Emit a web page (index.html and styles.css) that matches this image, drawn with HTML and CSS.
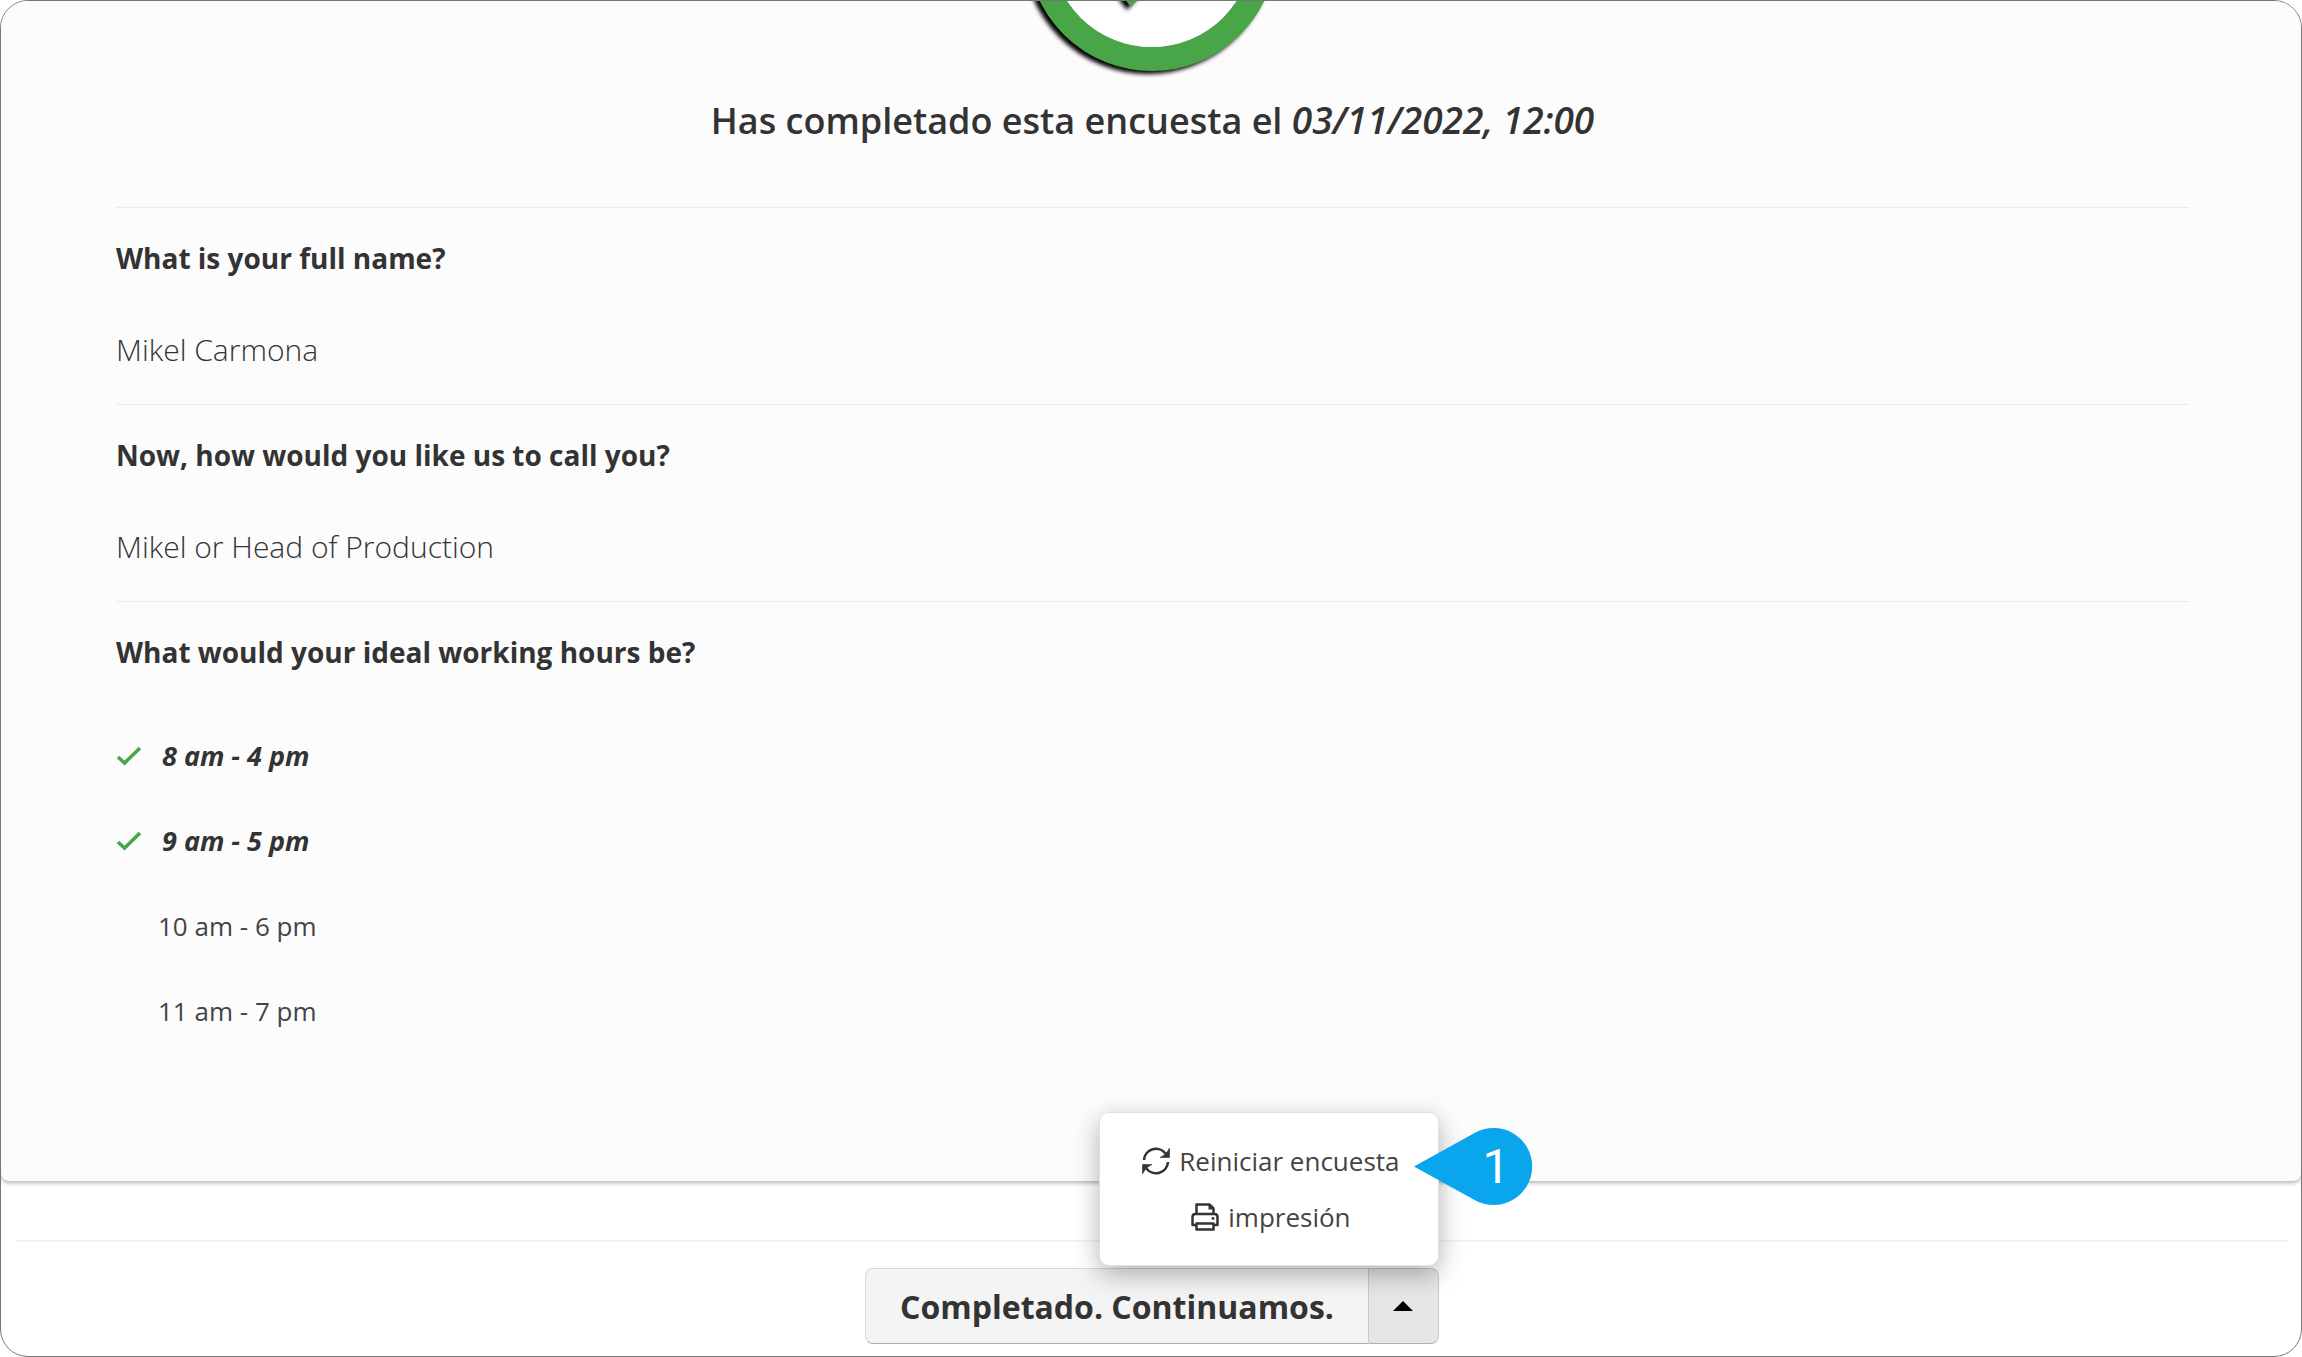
FILE: index.html
```
<!DOCTYPE html>
<html lang="es">
<head>
<meta charset="utf-8">
<title>Encuesta completada</title>
<meta name="viewport" content="width=device-width, initial-scale=1">
<link rel="stylesheet" href="styles.css">
</head>
<body>
<div class="window">
  <main class="card">
    <header class="hero">
      <svg class="hero-badge" viewBox="0 0 280 80" aria-hidden="true">
        <circle class="badge-shape" cx="139" cy="-55" r="113" fill="none" stroke="#48a648" stroke-width="24"/>
        <circle cx="139" cy="-55" r="101" fill="#fff"/>
        <path class="badge-tick" d="M70 -54 L86 -70 L118 -36 L190 -108 L206 -92 L118 6 Z" fill="#48a648"/>
      </svg>
      <h1 class="hero-title">Has completado esta encuesta el <em class="hero-date">03/11/2022, 12:00</em></h1>
    </header>
    <section class="question">
      <h2 class="question-title">What is your full name?</h2>
      <p class="answer">Mikel Carmona</p>
    </section>
    <section class="question">
      <h2 class="question-title">Now, how would you like us to call you?</h2>
      <p class="answer">Mikel or Head of Production</p>
    </section>
    <section class="question">
      <h2 class="question-title">What would your ideal working hours be?</h2>
      <ul class="options">
        <li class="option option-chosen"><svg class="tick" viewBox="0 0 26 20" aria-hidden="true"><path d="M2 11 8.500 17 24 2"/></svg><span>8 am - 4 pm</span></li>
        <li class="option option-chosen"><svg class="tick" viewBox="0 0 26 20" aria-hidden="true"><path d="M2 11 8.500 17 24 2"/></svg><span>9 am - 5 pm</span></li>
        <li class="option">10 am - 6 pm</li>
        <li class="option">11 am - 7 pm</li>
      </ul>
    </section>
  </main>
  <footer class="footer">
    <div class="split">
      <button class="split-main" type="button">Completado. Continuamos.</button>
      <button class="split-toggle" type="button" aria-label="Más opciones" aria-expanded="true">
        <svg class="caret" viewBox="0 0 20 10" aria-hidden="true"><path d="M0 10 10 0 20 10Z"/></svg>
      </button>
      <div class="menu">
        <button class="menu-item" type="button">
          <svg class="menu-icon" viewBox="0 0 28 28" aria-hidden="true">
            <path d="M2 13A12 12 0 0 1 23.500 6.500M26 15A12 12 0 0 1 4.500 21.500" fill="none" stroke="#333" stroke-width="2.600"/>
            <path d="M27.500 1V10.500H18Q24 8 27.500 1ZM0.500 27V17.500H10Q4 20 0.500 27Z" fill="#333" stroke="#333" stroke-width="0.600"/>
          </svg>
          Reiniciar encuesta
        </button>
        <button class="menu-item" type="button">
          <svg class="menu-icon" viewBox="0 0 28 28" aria-hidden="true">
            <g fill="none" stroke="#333" stroke-width="2.500" stroke-linejoin="round">
              <path d="M5.500 11V1.500H18.500L22.500 5.500V11"/>
              <path d="M5.500 22H1.500V14Q1.500 11 4.500 11H23.500Q26.500 11 26.500 14V22H22.500"/>
              <path d="M5.500 20.500H22.500V26.500H5.500Z"/>
            </g>
            <path d="M17.500 1.500V6.500H22.500Z" fill="#333"/>
            <circle cx="22" cy="15.500" r="1.400" fill="#333"/>
          </svg>
          impresión
        </button>
        <div class="callout">
          <svg class="callout-shape" viewBox="0 0 118 78" aria-hidden="true"><path d="M0 38.500 60.500 5.100A38.500 38.500 0 1 1 60.500 71.900Z" fill="#09a6ee"/></svg>
          <span class="callout-number">1</span>
        </div>
      </div>
    </div>
  </footer>
</div>
</body>
</html>
```
FILE: styles.css
```
* {
  box-sizing: border-box;
}

body {
  margin: 0;
  background: #fff;
  color: #333;
  font-family: "Open Sans", "Noto Sans", sans-serif;
}

h1, h2, p, ul {
  margin: 0;
  padding: 0;
}

button {
  font-family: inherit;
  color: inherit;
  cursor: pointer;
}

.window {
  display: flex;
  flex-direction: column;
  min-height: 100vh;
  overflow: hidden;
  background: #fff;
  border: 1px solid #777;
  border-radius: 28px;
}

.card {
  flex: 1;
  padding: 0 112px 0 115px;
  background: #fcfcfc;
  border-radius: 0 0 8px 8px;
  box-shadow: 0 2px 4px rgba(0, 0, 0, 0.3);
}

.hero {
  display: flex;
  flex-direction: column;
  align-items: center;
  padding-bottom: 46px;
}

.hero-badge {
  width: 280px;
  height: 80px;
}

.badge-shape,
.badge-tick {
  filter: drop-shadow(-4px 3px 2px #000);
}

.hero-title {
  font-size: 36px;
  line-height: 80px;
  font-weight: 600;
}

.hero-date {
  font-size: 37px;
  line-height: 1;
}

.question {
  border-top: 1px solid #ebebeb;
  padding: 24px 0 26px;
}

.question-title {
  font-size: 28px;
  line-height: 52px;
  font-weight: 700;
}

.answer {
  padding-top: 38px;
  font-size: 30px;
  line-height: 56px;
  font-weight: 300;
}

.options {
  padding-top: 35px;
  list-style: none;
}

.option {
  display: flex;
  align-items: center;
  height: 85px;
  padding-left: 42px;
  color: #444;
  font-size: 26px;
}

.option-chosen {
  gap: 20px;
  padding-left: 0;
  color: #333;
  font-size: 27px;
  font-style: italic;
  font-weight: 700;
}

.tick {
  width: 26px;
  height: 20px;
  fill: none;
  stroke: #48a648;
  stroke-width: 3.5;
}

.footer {
  display: flex;
  justify-content: center;
  margin: 59px 13px 12px 15px;
  padding-top: 26px;
  border-top: 2px solid #f2f2f2;
}

.split {
  position: relative;
  display: flex;
  height: 76px;
}

.split-main,
.split-toggle {
  border: 1px solid #d8d8d8;
  border-bottom-color: #b0b0b0;
  background: #f4f4f4;
}

.split-main {
  padding: 0 34px;
  border-radius: 8px 0 0 8px;
  border-right: 0;
  font-size: 32px;
  font-weight: 700;
}

.split-toggle {
  display: flex;
  align-items: center;
  justify-content: center;
  width: 71px;
  border-radius: 0 8px 8px 0;
  background: #e6e6e6;
  border-color: #c8c8c8;
  border-bottom-color: #b0b0b0;
}

.caret {
  width: 20px;
  height: 10px;
  fill: #000;
}

.menu {
  position: absolute;
  right: 0;
  bottom: 78px;
  display: flex;
  flex-direction: column;
  width: 340px;
  padding: 20px 0;
  background: #fff;
  border: 1px solid #e0e0e0;
  border-radius: 10px;
  box-shadow: 0 8px 26px rgba(0, 0, 0, 0.3);
}

.menu-item {
  display: flex;
  align-items: center;
  justify-content: center;
  gap: 9px;
  height: 56px;
  padding: 0 0 0 4px;
  border: 0;
  background: none;
  color: #444;
  font-size: 26px;
}

.menu-icon {
  width: 28px;
  height: 28px;
}

.callout {
  position: absolute;
  top: 15px;
  left: 314px;
  width: 118px;
  height: 78px;
}

.callout-shape {
  display: block;
  width: 118px;
  height: 78px;
}

.callout-number {
  position: absolute;
  inset: 0 0 0 46px;
  color: #fff;
  font-family: Roboto, sans-serif;
  font-size: 48px;
  line-height: 78px;
  text-align: center;
}
```
